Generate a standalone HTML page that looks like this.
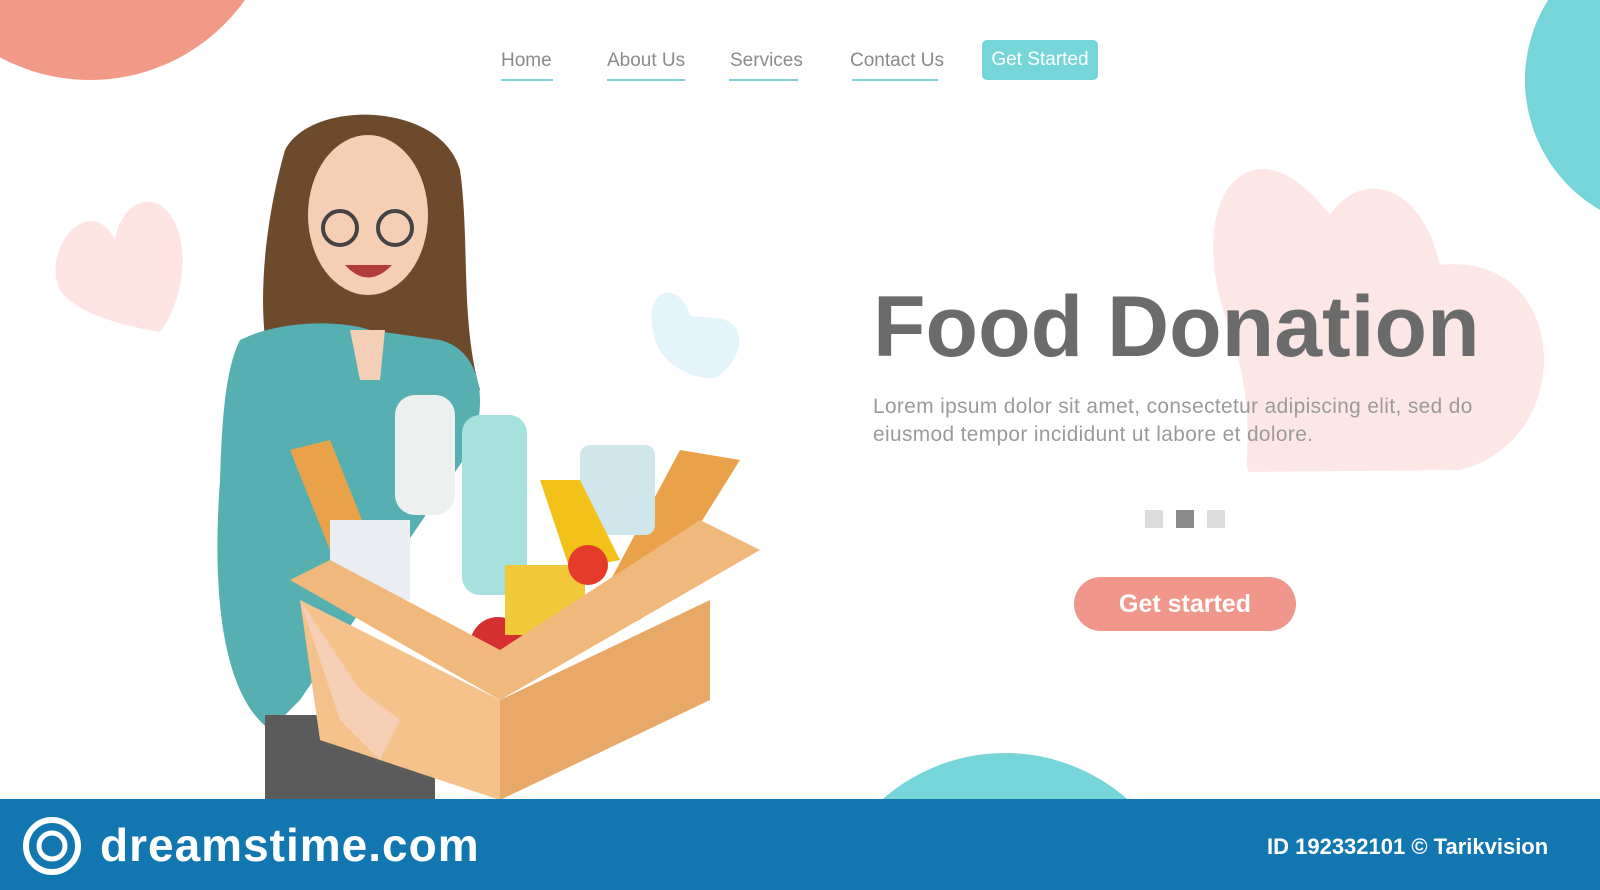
<!DOCTYPE html>
<html><head><meta charset="utf-8"><style>
*{margin:0;padding:0;box-sizing:border-box}
html{width:1600px;height:890px;overflow:hidden}
body{width:1600px;height:890px;overflow:hidden;background:#fff;position:relative;font-family:"Liberation Sans",sans-serif}
.abs{position:absolute}
.nav{position:absolute;top:50px;font-size:19px;color:#8a8a8a}
.nav span{position:absolute;white-space:nowrap}
.nav i{position:absolute;top:29px;height:2px;background:#7fd3d6}
</style></head><body>
<div class="abs" style="left:0;top:0;width:1600px;height:890px;overflow:hidden">
<div class="abs" style="left:-100px;top:-300px;width:380px;height:380px;border-radius:50%;background:#f29a88"></div>
<div class="abs" style="left:1525px;top:-70px;width:300px;height:300px;border-radius:50%;background:#76d5d8"></div>
<div class="abs" style="left:820px;top:753px;width:370px;height:137px;overflow:hidden"><div style="width:370px;height:370px;border-radius:50%;background:#76d5d8"></div></div>
<svg class="abs" style="left:0;top:0" width="1600" height="890">
<path d="M1330 215 C1250 110 1180 200 1230 330 C1260 420 1240 470 1250 472 L1460 470 C1580 440 1570 250 1440 265 C1420 180 1360 170 1330 215Z" fill="#fde7e6"/>
<path d="M115 240 C90 190 40 250 60 290 C80 320 150 330 160 332 C185 300 195 230 160 205 C140 195 120 210 115 240Z" fill="#fde4e2"/>
<path d="M690 315 C680 280 640 285 655 340 C665 370 700 380 715 378 C745 360 750 320 715 318 C705 316 695 318 690 315Z" fill="#e3f5fb"/>
<path d="M285 150 C310 100 440 100 460 170 C470 240 460 320 480 390 L400 420 L280 400 C250 330 265 220 285 150Z" fill="#6e4a2c"/>
<path d="M240 340 C280 320 340 320 370 330 L440 340 C480 350 490 400 470 450 L300 700 L270 730 C230 700 210 620 220 480 C222 420 225 370 240 340Z" fill="#56afb0"/>
<rect x="265" y="715" width="170" height="85" fill="#5b5b5b"/>
<ellipse cx="368" cy="215" rx="60" ry="80" fill="#f5cfb5"/>
<circle cx="340" cy="228" r="17" fill="none" stroke="#444" stroke-width="4"/>
<circle cx="395" cy="228" r="17" fill="none" stroke="#444" stroke-width="4"/>
<path d="M345 265 Q368 290 392 265Z" fill="#b33b3b"/>
<path d="M350 330 L385 330 L380 380 L360 380Z" fill="#f5cfb5"/>
<rect x="395" y="395" width="60" height="120" rx="20" fill="#eef0f0"/>
<rect x="462" y="415" width="65" height="180" rx="18" fill="#a7e1de"/>
<path d="M290 450 L330 440 L370 540 L330 550Z" fill="#e9a14a"/>
<path d="M680 450 L740 460 L640 620 L600 600Z" fill="#e9a14a"/>
<rect x="580" y="445" width="75" height="90" rx="10" fill="#cfe6ea"/>
<path d="M540 480 L580 480 L620 560 L570 570Z" fill="#f3c21a"/>
<rect x="330" y="520" width="80" height="80" fill="#eaeef2"/>
<circle cx="498" cy="645" r="28" fill="#d62f2f"/>
<rect x="505" y="565" width="80" height="70" fill="#f3c93c"/>
<circle cx="588" cy="565" r="20" fill="#e53b2b"/>
<path d="M290 580 L500 700 L760 550 L700 520 L500 650 L330 560Z" fill="#f0b87a"/>
<path d="M300 600 L500 700 L500 800 L320 740Z" fill="#f6c28c"/>
<path d="M500 700 L710 600 L710 700 L500 800Z" fill="#e8a968"/>
<path d="M300 600 L340 720 L380 760 L400 720 L360 690Z" fill="#f5cfb5"/>
</svg>
<div class="nav">
<span style="left:501px">Home</span><i style="left:501px;width:52px"></i>
<span style="left:607px">About Us</span><i style="left:607px;width:78px"></i>
<span style="left:730px">Services</span><i style="left:729px;width:69px"></i>
<span style="left:850px">Contact Us</span><i style="left:852px;width:86px"></i>
</div>
<div class="abs" style="left:982px;top:40px;width:116px;height:40px;border-radius:5px;background:#76d5d8;color:#fff;font-size:19px;line-height:40px;text-align:center">Get Started</div>
<div class="abs" style="left:873px;top:278px;font-size:86px;font-weight:bold;color:#6b6b6b;white-space:nowrap">Food Donation</div>
<div class="abs" style="left:873px;top:393px;font-size:20.8px;line-height:28px;color:#9a9a9a;width:680px;letter-spacing:0.4px">Lorem ipsum dolor sit amet, consectetur adipiscing elit, sed do<br>eiusmod tempor incididunt ut labore et dolore.</div>
<div class="abs" style="left:1145px;top:510px;width:18px;height:18px;background:#dcdcdc"></div>
<div class="abs" style="left:1176px;top:510px;width:18px;height:18px;background:#8a8a8a"></div>
<div class="abs" style="left:1207px;top:510px;width:18px;height:18px;background:#dcdcdc"></div>
<div class="abs" style="left:1074px;top:577px;width:222px;height:54px;border-radius:27px;background:#f0968a;color:#fff;font-size:25px;font-weight:bold;line-height:54px;text-align:center">Get started</div>
<div class="abs" style="left:0;top:799px;width:1600px;height:91px;background:#1277b0"></div>
<svg class="abs" style="left:22px;top:815px" width="60" height="62"><circle cx="30" cy="31" r="26" fill="none" stroke="#fff" stroke-width="6"/><circle cx="30" cy="31" r="13" fill="none" stroke="#fff" stroke-width="5"/></svg>
<div class="abs" style="left:100px;top:818px;font-size:46px;color:#fff;font-weight:bold;letter-spacing:1px">dreamstime.com</div>
<div class="abs" style="left:1267px;top:834px;font-size:22px;color:#fff;font-weight:bold;white-space:nowrap">ID 192332101 © Tarikvision</div>
</div>
</body></html>
